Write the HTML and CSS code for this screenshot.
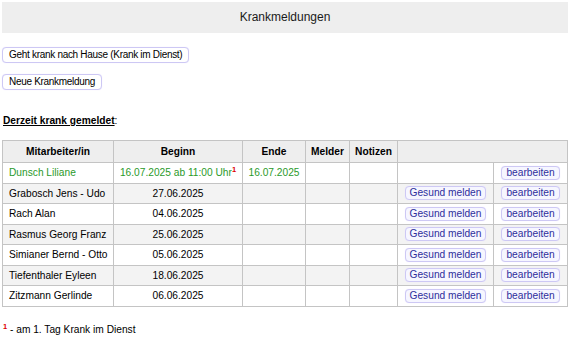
FILE: index.html
```html
<!DOCTYPE html>
<html lang="de">
<head>
  <meta charset="UTF-8" />
  <title>Krankmeldungen</title>
  <link rel="stylesheet" href="styles.css">
</head>
<body>

  <!-- Titelleiste -->
  <div class="titlebar">Krankmeldungen</div>

  <div class="actions">
    <button class="btn">Geht krank nach Hause (Krank im Dienst)</button>
    <button class="btn">Neue Krankmeldung</button>
  </div>

  <p class="caption"><b><u>Derzeit krank gemeldet</u></b>:</p>

  <table class="sicklist">
    <colgroup>
      <col style="width:111px">
      <col style="width:129px">
      <col style="width:63px">
      <col style="width:44px">
      <col style="width:48px">
      <col style="width:96px">
      <col style="width:74px">
    </colgroup>
    <thead>
      <tr>
        <th>Mitarbeiter/in</th>
        <th>Beginn</th>
        <th>Ende</th>
        <th>Melder</th>
        <th>Notizen</th>
        <th colspan="2"></th>
      </tr>
    </thead>
    <tbody>
      <tr class="kid">
        <td class="name">Dunsch Liliane</td>
        <td>16.07.2025 ab 11:00 Uhr<sup>1</sup></td>
        <td>16.07.2025</td>
        <td></td>
        <td></td>
        <td></td>
        <td><button class="btn small">bearbeiten</button></td>
      </tr>
      <tr class="odd">
        <td class="name">Grabosch Jens - Udo</td>
        <td>27.06.2025</td>
        <td></td><td></td><td></td>
        <td><button class="btn small">Gesund melden</button></td>
        <td><button class="btn small">bearbeiten</button></td>
      </tr>
      <tr>
        <td class="name">Rach Alan</td>
        <td>04.06.2025</td>
        <td></td><td></td><td></td>
        <td><button class="btn small">Gesund melden</button></td>
        <td><button class="btn small">bearbeiten</button></td>
      </tr>
      <tr class="odd">
        <td class="name">Rasmus Georg Franz</td>
        <td>25.06.2025</td>
        <td></td><td></td><td></td>
        <td><button class="btn small">Gesund melden</button></td>
        <td><button class="btn small">bearbeiten</button></td>
      </tr>
      <tr>
        <td class="name">Simianer Bernd - Otto</td>
        <td>05.06.2025</td>
        <td></td><td></td><td></td>
        <td><button class="btn small">Gesund melden</button></td>
        <td><button class="btn small">bearbeiten</button></td>
      </tr>
      <tr class="odd">
        <td class="name">Tiefenthaler Eyleen</td>
        <td>18.06.2025</td>
        <td></td><td></td><td></td>
        <td><button class="btn small">Gesund melden</button></td>
        <td><button class="btn small">bearbeiten</button></td>
      </tr>
      <tr>
        <td class="name">Zitzmann Gerlinde</td>
        <td>06.06.2025</td>
        <td></td><td></td><td></td>
        <td><button class="btn small">Gesund melden</button></td>
        <td><button class="btn small">bearbeiten</button></td>
      </tr>
    </tbody>
  </table>

  <p class="footnote"><sup>1</sup> - am 1. Tag Krank im Dienst</p>

</body>
</html>
```

FILE: styles.css
```css
body {
  font-family: 'Liberation Sans', Arial, sans-serif;
  font-size: 10.2px;
  margin: 0;
  padding: 2px 5px 0 2px;
  color: #000;
  background: #fff;
}
.titlebar {
  background: #eeeeee;
  height: 31px;
  line-height: 31px;
  text-align: center;
  font-size: 12px;
  color: #1a1a1a;
}
.actions {
  display: flex;
  flex-direction: column;
  align-items: flex-start;
  gap: 11px;
  margin-top: 14px;
}
.btn {
  font-family: inherit;
  font-size: 10px;
  letter-spacing: -0.3px;
  background: #fff;
  color: #000;
  border: 1px solid #cdc8f4;
  border-radius: 4px;
  padding: 0 6px;
  height: 16px;
  line-height: 14px;
  box-shadow: 0 0 1px #e4e0ff;
}
.btn.small {
  font-size: 10.2px;
  letter-spacing: 0;
  color: #2e2e9c;
  background: #f6f6ff;
  padding: 0 4px;
  height: 14px;
  line-height: 12px;
}
.caption {
  margin: 25px 0 0 1px;
  height: 13px;
}
.caption u {
  text-decoration-thickness: 1px;
}
.sicklist {
  border-collapse: collapse;
  width: 566px;
  table-layout: fixed;
  margin-top: 12px;
}
.sicklist th,
.sicklist td {
  border: 1px solid #c4c4c4;
  height: 19.5px;
  padding: 0 4px;
  text-align: center;
  white-space: nowrap;
}
.sicklist th {
  background: #eeeeee;
  height: 21px;
  font-weight: bold;
}
.sicklist td.name {
  text-align: left;
  padding-left: 6px;
}
.sicklist tr.odd td {
  background: #f3f3f3;
}
.sicklist tr.kid td {
  color: #2a9a2a;
}
sup {
  color: #d00;
  font-size: 7.5px;
  font-weight: bold;
  vertical-align: 4px;
  line-height: 0;
}
.footnote {
  margin: 17px 0 0 1px;
}
```
